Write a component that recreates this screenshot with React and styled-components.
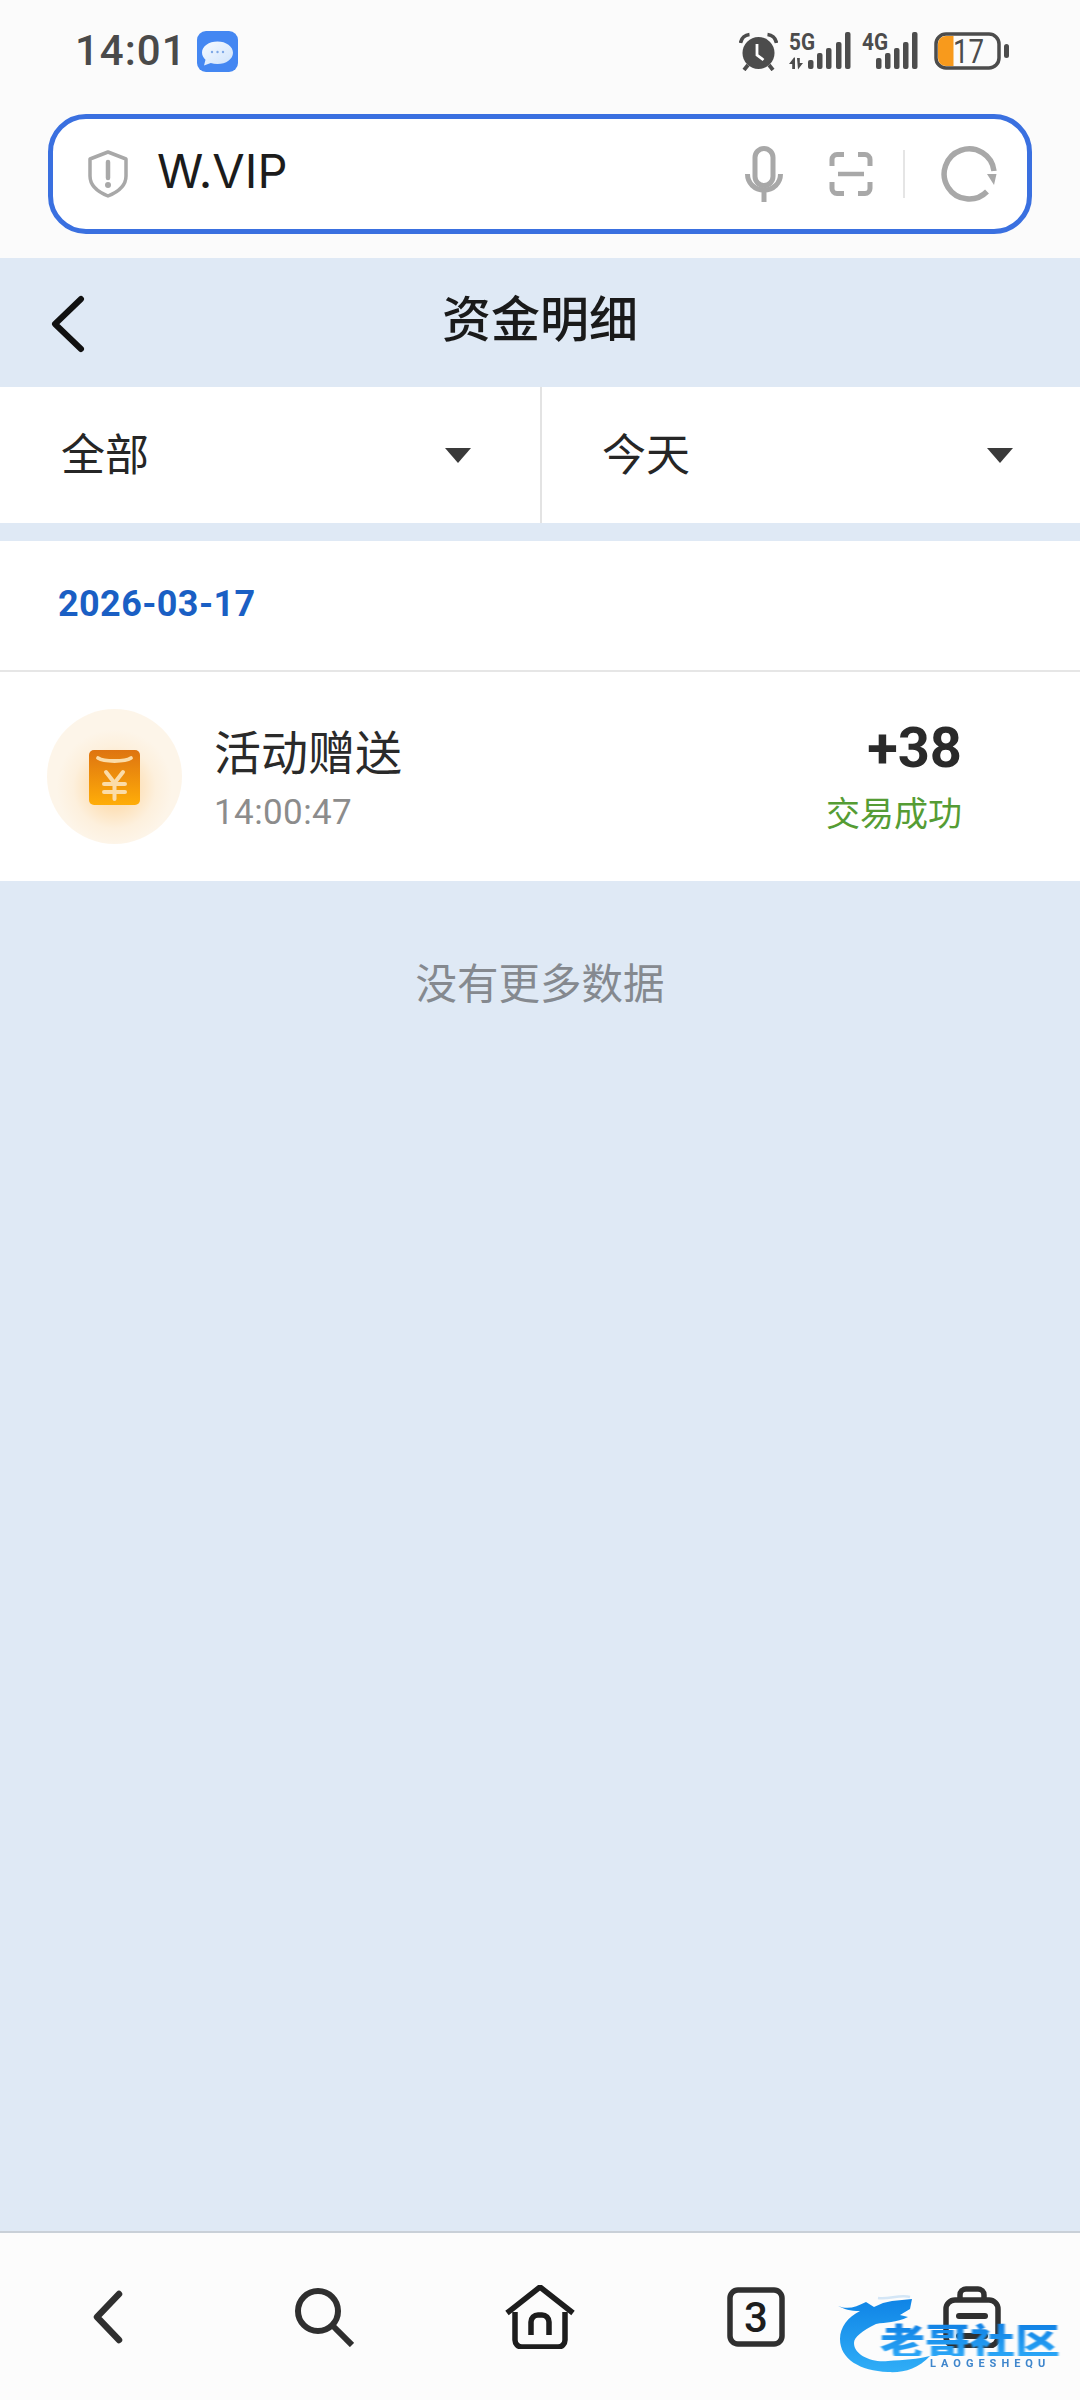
import React from "react";
import styled, { createGlobalStyle } from "styled-components";

const Global = createGlobalStyle`
  html, body { margin: 0; padding: 0; background: #dfe9f5; }
  * { box-sizing: border-box; }
  body { font-family: Roboto, "Noto Sans CJK SC", sans-serif; }
`;
const Page = styled.div`
  width: 1080px; height: 2400px; display: flex; flex-direction: column; background: #dfe9f5; overflow: hidden;
`;
const Chrome = styled.div`
  height: 258px; background: #fbfbfb; padding: 0 48px;
`;
const StatusBar = styled.div`
  height: 114px; display: flex; align-items: flex-start; justify-content: space-between; padding: 30px 23px 0 27px;
`;
const Time = styled.div`
  font: 500 42px/42px Roboto, sans-serif; letter-spacing: 1px; color: #4a4a4a;
`;
const Left = styled.div`display:flex; align-items:center; gap: 10px;`;
const StatusIcons = styled.div`display:flex; align-items:center; height: 42px;`;
const Gap = styled.div`width: ${p => p.$w}px; flex: none;`;
const Address = styled.div`
  height: 120px; width: 984px; border: 5px solid #3a70e0; border-radius: 38px; background: #fff;
  display: flex; align-items: center; padding: 0 0 0 34px;
`;
const Url = styled.div`
  font: 400 47px/50px Inter, Roboto, sans-serif; color: #1c1c1c; margin: 0 0 6px 28px; flex: 1;
`;
const AddrIcons = styled.div`display:flex; align-items:center; padding-right: 30px;`;
const Sep = styled.div`width: 2px; height: 48px; background: #e5e5e5; margin: 0 36px 0 30px;`;
const Header = styled.div`
  height: 129px; display:grid; grid-template-columns: 1fr auto 1fr; align-items:center;
`;
const BackBtn = styled.div`display:flex; margin: 2px 0 0 51px;`;
const PageTitle = styled.div`
  font: 500 49px/56px "Noto Sans CJK SC", sans-serif; color: #1a1a1a; margin-bottom: 14px;
`;
const Filters = styled.div`height: 136px; display:flex; background:#fff;`;
const Filter = styled.div`
  flex: 0 0 540px; display:flex; align-items:center; justify-content:space-between; padding: 0 69px 0 61px;
  & + & { border-left: 2px solid #e3e3e3; padding-left: 60px; padding-right: 67px; }
`;
const FilterLabel = styled.div`
  font: 400 44px/52px "Noto Sans CJK SC", sans-serif; color:#262626; margin-bottom: 6px;
`;
const Caret = styled.div`
  width: 0; height: 0; border-left: 13px solid transparent; border-right: 13px solid transparent; border-top: 15px solid #3a3a3a;
`;
const DateRow = styled.div`
  margin-top: 18px; height: 131px; background:#fff; border-bottom: 2px solid #e6e6e6; display:flex; align-items:center; padding: 0 0 4px 58px;
  font: 700 36px/40px Roboto, sans-serif; color:#1a5fc4; letter-spacing: 0.4px;
`;
const Item = styled.div`
  height: 209px; background:#fff; display:flex; align-items:center; padding: 0 118px 0 47px;
`;
const Avatar = styled.div`
  width: 135px; height: 135px; border-radius: 50%; flex: none;
  background: radial-gradient(circle at 50% 58%, #fdd9a8 0%, #fde2bc 22%, #fdf0dd 40%, #fdf5e9 56%);
  display:flex; align-items:center; justify-content:center; padding-top: 1px;
`;
const Info = styled.div`flex:1; margin: 2px 0 0 32px; display:flex; flex-direction:column;`;
const Title = styled.div`font: 400 47px/54px "Noto Sans CJK SC", sans-serif; color:#2a2a2a;`;
const Sub = styled.div`font: 400 35px/40px Roboto, sans-serif; color:#8c8c8c; margin-top: 16px; letter-spacing: .4px;`;
const Right = styled.div`display:flex; flex-direction:column; align-items:flex-end; margin-bottom: 4px;`;
const Amount = styled.div`font: 700 56px/60px Roboto, sans-serif; color:#2a2a2a;`;
const Status = styled.div`font: 400 34px/40px "Noto Sans CJK SC", sans-serif; color:#559c34; margin-top: 14px;`;
const NoMore = styled.div`
  margin-top: 73px; text-align:center; font: 400 41.500px/54px "Noto Sans CJK SC", sans-serif; color:#85898f; flex: 1;
`;
const BottomBar = styled.div`
  height: 169px; background:#fcfcfc; border-top: 2px solid #c9d0d8; display:flex; align-items:center; position: relative;
`;
const Tab = styled.div`flex: 1; display:flex; justify-content:center; align-items:center;`;
const Mark = styled.div`position:absolute; left: 838px; top: 60px; width: 240px; height: 84px;`;
const DragonWrap = styled.div`position:absolute; left: 0; top: 0; display:flex; filter: blur(0.7px);`;
const MarkText = styled.div`
  position:absolute; left: 42px; top: 29px; font: 900 36px/34px "Noto Sans CJK SC", sans-serif; white-space: nowrap;
  transform: scaleX(1.25); transform-origin: left center; filter: blur(0.7px);
  color: transparent; background: linear-gradient(180deg, #0f7fe4, #2aa6f6); -webkit-background-clip: text; background-clip: text;
`;
const MarkSub = styled.div`
  position:absolute; left: 92px; top: 65px; font: 700 11px/12px Roboto, sans-serif; letter-spacing: 5px; color:#3f86cc; white-space: nowrap; filter: blur(0.4px);
`;

const Bubble = () => (
  <svg width="41" height="41" viewBox="0 0 41 41">
    <defs><linearGradient id="bb" x1="0" y1="0" x2="1" y2="1"><stop offset="0" stopColor="#f6faff"/><stop offset="1" stopColor="#cfe3fb"/></linearGradient></defs>
    <rect width="41" height="41" rx="9" fill="#4487f2"/>
    <path d="M20.500 10.500c-8.600 0-15.500 4.800-15.500 11 0 3 1.500 5.500 3.500 7.300L7 34.500l6.800-2.400c2 .6 4.300.9 6.700.9 8.600 0 15.500-5 15.500-11.300s-6.900-11.200-15.500-11.200z" fill="url(#bb)"/>
    <circle cx="15" cy="21" r="1.200" fill="#7ea8e6"/><circle cx="20.500" cy="21" r="1.200" fill="#7ea8e6"/><circle cx="26" cy="21" r="1.200" fill="#7ea8e6"/>
  </svg>
);
const Alarm = () => (
  <svg width="39" height="39" viewBox="0 0 39 39">
    <circle cx="19.500" cy="21" r="16" fill="#4c4c4c"/>
    <path d="M1.500 11C2.500 6 6 3 10.500 2.500" stroke="#4c4c4c" strokeWidth="3.600" fill="none"/><path d="M37.500 11C36.500 6 33 3 28.500 2.500" stroke="#4c4c4c" strokeWidth="3.600" fill="none"/>
    <path d="M9 33l-4 5M30 33l4 5" stroke="#4c4c4c" strokeWidth="3.800"/>
    <path d="M18 12v11l6.500 5" stroke="#fff" strokeWidth="2.800" fill="none"/>
  </svg>
);
const Signal = ({ kind, bars, width, arrows }) => (
  <svg width={width} height="50" viewBox={`0 -6 ${width} 50`}>
    <text x="0" y="18" fontFamily="Roboto" fontWeight="700" fontSize="24" fill="#4c4c4c" textLength="26" lengthAdjust="spacingAndGlyphs">{kind}</text>
    {arrows ? <path d="M5 25.500L0 32h3.200v5h2.800V25.500zM9 37.500l5-6.500h-3.200v-5H8z" fill="#4c4c4c"/> : null}
    {bars.map(([x, h]) => (
      <rect key={x} x={x} y={37 - h} width="5.500" height={h} rx="2" fill="#4c4c4c"/>
    ))}
  </svg>
);
const Battery = () => (
  <svg width="75" height="38" viewBox="0 0 75 38">
    <rect x="2" y="2" width="63" height="34" rx="10" fill="none" stroke="#4c4c4c" strokeWidth="3.500"/>
    <path d="M4 12a8 8 0 0 1 8-8h7.500v30H12a8 8 0 0 1-8-8z" fill="#f89a1c"/>
    <rect x="70" y="12" width="5" height="14" rx="2.500" fill="#4c4c4c"/>
    <text x="19" y="31" fontFamily="Roboto" fontSize="34" fill="#4c4c4c" textLength="31" lengthAdjust="spacingAndGlyphs">17</text>
  </svg>
);
const Shield = () => (
  <svg width="42" height="48" viewBox="0 0 42 48">
    <path d="M21 2l18 7v17c0 10-8 16-18 20C11 42 3 36 3 26V9z" fill="none" stroke="#a8a8a8" strokeWidth="3.500" strokeLinejoin="round"/>
    <path d="M21 12v16" stroke="#a8a8a8" strokeWidth="4.500" strokeLinecap="round"/>
    <circle cx="21" cy="35" r="3" fill="#a8a8a8"/>
  </svg>
);
const Mic = () => (
  <svg width="38" height="56" viewBox="0 0 38 56">
    <rect x="10" y="2.500" width="18" height="37" rx="9" fill="none" stroke="#a8a8a8" strokeWidth="5"/>
    <path d="M2.500 28c0 9 7 16 16.500 16s16.500-7 16.500-16" fill="none" stroke="#a8a8a8" strokeWidth="5"/>
    <path d="M19 44v12" stroke="#a8a8a8" strokeWidth="5"/>
  </svg>
);
const Scan = () => (
  <svg width="44" height="44" viewBox="0 0 44 44">
    <path d="M15 2.500H8a5 5 0 0 0-5 5V14M29 2.500h7a5 5 0 0 1 5 5V14M15 41.500H8a5 5 0 0 1-5-5V30M29 41.500h7a5 5 0 0 0 5-5V30" fill="none" stroke="#a8a8a8" strokeWidth="5"/>
    <path d="M9 22h26" stroke="#a8a8a8" strokeWidth="4.500"/>
  </svg>
);
const Reload = () => (
  <svg width="56" height="56" viewBox="0 0 56 56">
    <path d="M46 45.500A25 25 0 1 1 53 25" fill="none" stroke="#a8a8a8" strokeWidth="5.500"/>
    <path d="M46 28l9.500 0-2.500 11z" fill="#a8a8a8"/>
  </svg>
);
const Chevron = ({ w, h, sw, color }) => (
  <svg width={w} height={h} viewBox={`0 0 ${w} ${h}`}>
    <path d={`M${w - 4} 4L4 ${h / 2}L${w - 4} ${h - 4}`} fill="none" stroke={color} strokeWidth={sw} strokeLinecap="round" strokeLinejoin="round"/>
  </svg>
);
const Packet = () => (
  <svg width="51" height="55" viewBox="0 0 51 55">
    <defs><linearGradient id="rp" x1="0" y1="0" x2="0" y2="1"><stop offset="0" stopColor="#de7410"/><stop offset="1" stopColor="#ffad08"/></linearGradient></defs>
    <rect width="51" height="55" rx="5" fill="url(#rp)"/>
    <path d="M9 8c6 4 27 4 33 0" fill="none" stroke="#fbdca8" strokeWidth="3.800" strokeLinecap="round"/>
    <path d="M17 22l8.500 11 8.500-11M25.500 33v16M15 34h21M15 42h21" fill="none" stroke="#fbdca8" strokeWidth="4" strokeLinecap="round"/>
  </svg>
);
const SearchIcon = () => (
  <svg width="60" height="60" viewBox="0 0 60 60"><circle cx="24" cy="24" r="20" fill="none" stroke="#2f2f2f" strokeWidth="6"/><path d="M38 38l20 20" stroke="#2f2f2f" strokeWidth="6"/></svg>
);
const HomeIcon = () => (
  <svg width="70" height="64" viewBox="0 0 70 64">
    <path d="M2 28L35 2l33 26" fill="none" stroke="#1d1d1d" strokeWidth="5.500"/>
    <path d="M10 27v28a7 7 0 0 0 7 7h36a7 7 0 0 0 7-7V27" fill="none" stroke="#1d1d1d" strokeWidth="5.500"/>
    <path d="M26 50V37a7 7 0 0 1 7-7h4a7 7 0 0 1 7 7v13" fill="none" stroke="#1d1d1d" strokeWidth="5.500"/>
  </svg>
);
const TabsIcon = () => (
  <svg width="58" height="60" viewBox="0 0 58 60">
    <rect x="3" y="3" width="52" height="54" rx="8" fill="none" stroke="#303030" strokeWidth="5.500"/>
    <text x="29" y="45" textAnchor="middle" fontFamily="Roboto" fontSize="42" fontWeight="500" fill="#1d1d1d">3</text>
  </svg>
);
const CaseIcon = () => (
  <svg width="58" height="62" viewBox="0 0 58 62">
    <rect x="3" y="14" width="52" height="46" rx="9" fill="none" stroke="#303030" strokeWidth="5.500"/>
    <path d="M17 14V9a6 6 0 0 1 6-6h12a6 6 0 0 1 6 6v5" fill="none" stroke="#303030" strokeWidth="5.500"/>
    <path d="M16 30h26" stroke="#303030" strokeWidth="6" strokeLinecap="round"/>
    <path d="M16 50h26" stroke="#303030" strokeWidth="6" strokeLinecap="round"/>
  </svg>
);
const Dragon = () => (
  <svg width="100" height="84" viewBox="0 0 100 84">
    <defs><linearGradient id="dr" x1="0" y1="0" x2="0" y2="1"><stop offset="0" stopColor="#0f84e6"/><stop offset="1" stopColor="#30aef7"/></linearGradient></defs>
    <path d="M0 13C10 17 18 14 28 9L36 14L45 10L54 8L74 6L72 16L62 22L70 24C58 30 48 29 38 31C24 38 16 44 16 50C16 62 34 70 50 68C66 67 80 66 92 63C80 76 65 80 50 79C22 78 2 66 2 46C2 34 10 24 22 18C12 18 6 16 0 13Z" fill="url(#dr)"/>
    <path d="M40 5C50 7 62 1 72 4" fill="none" stroke="#d4e6f6" strokeWidth="2.500"/>
  </svg>
);

export default function App() {
  return (
    <Page>
      <Global />
      <Chrome>
        <StatusBar>
          <Left><Time>14:01</Time><Bubble /></Left>
          <StatusIcons>
            <Alarm /><Gap $w={11} />
            <Signal kind="5G" width={62} arrows bars={[[19, 9], [28, 16], [37, 21], [47, 27], [56, 37]]} /><Gap $w={11} />
            <Signal kind="4G" width={56} bars={[[14, 11], [23, 16], [32, 21], [41, 27], [50, 37]]} /><Gap $w={16} />
            <Battery />
          </StatusIcons>
        </StatusBar>
        <Address>
          <Shield /><Url>W.VIP</Url>
          <AddrIcons><Mic /><Gap $w={46} /><Scan /><Sep /><Reload /></AddrIcons>
        </Address>
      </Chrome>
      <Header>
        <BackBtn><Chevron w={34} h={58} sw={6} color="#111" /></BackBtn>
        <PageTitle>资金明细</PageTitle>
      </Header>
      <Filters>
        <Filter><FilterLabel>全部</FilterLabel><Caret /></Filter>
        <Filter><FilterLabel>今天</FilterLabel><Caret /></Filter>
      </Filters>
      <DateRow>2026-03-17</DateRow>
      <Item>
        <Avatar><Packet /></Avatar>
        <Info><Title>活动赠送</Title><Sub>14:00:47</Sub></Info>
        <Right><Amount>+38</Amount><Status>交易成功</Status></Right>
      </Item>
      <NoMore>没有更多数据</NoMore>
      <BottomBar>
        <Tab><Chevron w={30} h={54} sw={6.5} color="#2f2f2f" /></Tab>
        <Tab><SearchIcon /></Tab>
        <Tab><HomeIcon /></Tab>
        <Tab><TabsIcon /></Tab>
        <Tab><CaseIcon /></Tab>
        <Mark>
          <DragonWrap><Dragon /></DragonWrap>
          <MarkText>老哥社区</MarkText>
          <MarkSub>LAOGESHEQU</MarkSub>
        </Mark>
      </BottomBar>
    </Page>
  );
}
